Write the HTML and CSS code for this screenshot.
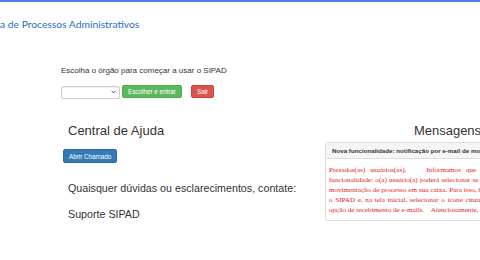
FILE: index.html
```html
<!DOCTYPE html>
<html lang="pt-BR">
<head>
    <meta charset="UTF-8">
    <meta name="viewport" content="width=device-width, initial-scale=1.0">
    <title>SIPAD</title>
    <link rel="stylesheet" href="styles.css">
</head>
<body>
    <div class="topbar">
        <div class="brand">Sistema de Processos Administrativos</div>
    </div>

    <div class="chooser">
        <div class="chooser-label">Escolha o órgão para começar a usar o SIPAD</div>
        <form class="chooser-form">
            <div class="select-wrap">
                <select class="select"></select>
                <svg class="select-caret" width="5" height="4" viewBox="0 0 5 4"><path d="M0.6 0.8 L2.5 2.8 L4.4 0.8" fill="none" stroke="#555" stroke-width="1"/></svg>
            </div>
            <button type="button" class="btn btn-success">Escolher e entrar</button>
            <button type="button" class="btn btn-danger">Sair</button>
        </form>
    </div>

    <div class="main">
        <div class="col-help">
            <h3 class="title">Central de Ajuda</h3>
            <button type="button" class="btn btn-primary">Abrir Chamado</button>
            <p class="contact">Quaisquer dúvidas ou esclarecimentos, contate:</p>
            <p class="contact contact-name">Suporte SIPAD</p>
        </div>

        <div class="col-messages">
            <h3 class="title title-center">Mensagens</h3>
            <div class="panel">
                <div class="panel-heading">Nova funcionalidade: notificação por e-mail de movimentação</div>
                <div class="panel-body">Prezados(as) usuários(as),&nbsp;&nbsp;&nbsp; Informamos que o SIPAD já tem nova funcionalidade: o(a) usuário(a) poderá selecionar se quer receber aviso a cada movimentação de processo em sua caixa. Para isso, basta que o usuário acesse o SIPAD e, na tela inicial, selecionar o ícone cinza com o nome e marcar a opção de recebimento de e-mails.&nbsp;&nbsp;&nbsp; Atenciosamente, Equipe SIPAD.</div>
            </div>
        </div>
    </div>
</body>
</html>
```

FILE: styles.css
```css
* {
    box-sizing: border-box;
}

body {
    margin: 0;
    font-family: "Liberation Sans", Arial, sans-serif;
    color: #333;
    background: #fff;
    overflow: hidden;
}

.topbar {
    border-top: 2px solid #4a80e4;
}

.brand {
    margin-left: -30px;
    padding-top: 15px;
    font-family: Lato, "Open Sans", sans-serif;
    font-size: 10.3px;
    line-height: 14px;
    color: #2a6cc4;
    white-space: nowrap;
}

.chooser {
    margin-left: 61px;
    padding-top: 35px;
}

.chooser-label {
    font-size: 8px;
    line-height: 10px;
}

.chooser-form {
    display: flex;
    align-items: center;
    margin: 9px 0 0;
}

.select-wrap {
    position: relative;
    width: 59px;
    height: 13px;
}

.select {
    appearance: none;
    width: 100%;
    height: 100%;
    margin: 0;
    border: 1px solid #ccc;
    border-radius: 2px;
    background: #fff;
    box-shadow: inset 0 1px 1px rgba(0,0,0,0.075);
}

.select-caret {
    position: absolute;
    right: 4px;
    top: 5px;
}

.btn {
    height: 13px;
    margin: 0;
    padding: 0 5px;
    border: 1px solid transparent;
    border-radius: 2px;
    font-family: "Liberation Sans", Arial, sans-serif;
    font-size: 6.3px;
    line-height: 11px;
    color: #fff;
    white-space: nowrap;
}

.btn-success {
    margin-left: 2px;
    background: #5cb85c;
    border-color: #4cae4c;
}

.btn-danger {
    margin-left: 9px;
    background: #d9534f;
    border-color: #d43f3a;
}

.btn-primary {
    display: block;
    height: 14px;
    margin-top: 10px;
    background: #337ab7;
    border-color: #2e6da4;
}

.main {
    display: grid;
    grid-template-columns: 262px 245px;
    margin: 25px 0 0 63px;
}

.title {
    margin: 0;
    padding-left: 5px;
    font-size: 13px;
    line-height: 16px;
    font-weight: normal;
}

.title-center {
    padding-left: 0;
    text-align: center;
}

.contact {
    margin: 19px 0 0;
    padding-left: 5px;
    font-size: 10.7px;
    line-height: 13px;
}

.contact-name {
    margin-top: 13px;
}

.panel {
    margin-top: 3px;
    border: 1px solid #ddd;
    border-radius: 3px;
    box-shadow: 0 1px 2px rgba(0,0,0,0.06);
}

.panel-heading {
    height: 16px;
    padding: 0 6px;
    background: #f5f5f5;
    border-bottom: 1px solid #ddd;
    font-size: 6.2px;
    font-weight: bold;
    line-height: 15px;
    white-space: nowrap;
    overflow: hidden;
}

.panel-body {
    padding: 6px 15px 5px 3px;
    font-family: "Liberation Serif", "Times New Roman", serif;
    font-size: 7.1px;
    line-height: 10px;
    color: #e21b1b;
    text-align: justify;
}
```
